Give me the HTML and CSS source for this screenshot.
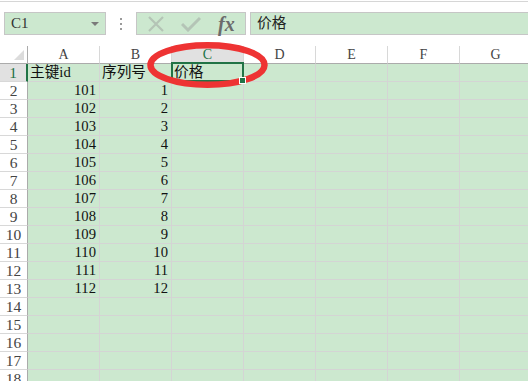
FILE: index.html
```html
<!DOCTYPE html>
<html lang="zh-CN">
<head>
    <meta charset="UTF-8">
    <title>Sheet1</title>
    <link rel="stylesheet" href="styles.css">
</head>
<body>
    <div class="toolbar">
        <div class="namebox">
            <span class="ref">C1</span>
            <span class="caret"></span>
        </div>
        <div class="grip"><i></i><i></i><i></i></div>
        <div class="fxbox">
            <svg class="btn" width="18" height="16" viewBox="0 0 18 16">
                <path d="M2 1 L16 15 M16 1 L2 15" stroke="#b4c4b6" stroke-width="2.2" fill="none"/>
            </svg>
            <svg class="btn" width="20" height="16" viewBox="0 0 20 16">
                <path d="M1 8 L7 14 L19 2" stroke="#b4c4b6" stroke-width="3" fill="none"/>
            </svg>
            <span class="fx">fx</span>
        </div>
        <div class="formula">价格</div>
    </div>

    <div class="sheet">
        <div class="corner"></div>
        <div class="colhead">A</div>
        <div class="colhead">B</div>
        <div class="colhead active">C</div>
        <div class="colhead">D</div>
        <div class="colhead">E</div>
        <div class="colhead">F</div>
        <div class="colhead">G</div>

        <div class="rowhead active">1</div>
        <div class="cell">主键id</div>
        <div class="cell">序列号</div>
        <div class="cell sel">价格</div>
        <div class="cell"></div><div class="cell"></div><div class="cell"></div><div class="cell"></div>

        <div class="rowhead">2</div><div class="cell num">101</div><div class="cell num">1</div>
        <div class="cell"></div><div class="cell"></div><div class="cell"></div><div class="cell"></div><div class="cell"></div>
        <div class="rowhead">3</div><div class="cell num">102</div><div class="cell num">2</div>
        <div class="cell"></div><div class="cell"></div><div class="cell"></div><div class="cell"></div><div class="cell"></div>
        <div class="rowhead">4</div><div class="cell num">103</div><div class="cell num">3</div>
        <div class="cell"></div><div class="cell"></div><div class="cell"></div><div class="cell"></div><div class="cell"></div>
        <div class="rowhead">5</div><div class="cell num">104</div><div class="cell num">4</div>
        <div class="cell"></div><div class="cell"></div><div class="cell"></div><div class="cell"></div><div class="cell"></div>
        <div class="rowhead">6</div><div class="cell num">105</div><div class="cell num">5</div>
        <div class="cell"></div><div class="cell"></div><div class="cell"></div><div class="cell"></div><div class="cell"></div>
        <div class="rowhead">7</div><div class="cell num">106</div><div class="cell num">6</div>
        <div class="cell"></div><div class="cell"></div><div class="cell"></div><div class="cell"></div><div class="cell"></div>
        <div class="rowhead">8</div><div class="cell num">107</div><div class="cell num">7</div>
        <div class="cell"></div><div class="cell"></div><div class="cell"></div><div class="cell"></div><div class="cell"></div>
        <div class="rowhead">9</div><div class="cell num">108</div><div class="cell num">8</div>
        <div class="cell"></div><div class="cell"></div><div class="cell"></div><div class="cell"></div><div class="cell"></div>
        <div class="rowhead">10</div><div class="cell num">109</div><div class="cell num">9</div>
        <div class="cell"></div><div class="cell"></div><div class="cell"></div><div class="cell"></div><div class="cell"></div>
        <div class="rowhead">11</div><div class="cell num">110</div><div class="cell num">10</div>
        <div class="cell"></div><div class="cell"></div><div class="cell"></div><div class="cell"></div><div class="cell"></div>
        <div class="rowhead">12</div><div class="cell num">111</div><div class="cell num">11</div>
        <div class="cell"></div><div class="cell"></div><div class="cell"></div><div class="cell"></div><div class="cell"></div>
        <div class="rowhead">13</div><div class="cell num">112</div><div class="cell num">12</div>
        <div class="cell"></div><div class="cell"></div><div class="cell"></div><div class="cell"></div><div class="cell"></div>
        <div class="rowhead">14</div>
        <div class="cell"></div><div class="cell"></div><div class="cell"></div><div class="cell"></div><div class="cell"></div><div class="cell"></div><div class="cell"></div>
        <div class="rowhead">15</div>
        <div class="cell"></div><div class="cell"></div><div class="cell"></div><div class="cell"></div><div class="cell"></div><div class="cell"></div><div class="cell"></div>
        <div class="rowhead">16</div>
        <div class="cell"></div><div class="cell"></div><div class="cell"></div><div class="cell"></div><div class="cell"></div><div class="cell"></div><div class="cell"></div>
        <div class="rowhead">17</div>
        <div class="cell"></div><div class="cell"></div><div class="cell"></div><div class="cell"></div><div class="cell"></div><div class="cell"></div><div class="cell"></div>
        <div class="rowhead">18</div>
        <div class="cell"></div><div class="cell"></div><div class="cell"></div><div class="cell"></div><div class="cell"></div><div class="cell"></div><div class="cell"></div>
    </div>

    <!-- hand-drawn red circle round the C1 cell -->
    <svg class="mark" width="528" height="381" viewBox="0 0 528 381">
        <ellipse cx="207.5" cy="65" rx="57" ry="19.8" fill="none" stroke="#ee3333" stroke-width="6.5"/>
    </svg>
</body>
</html>
```

FILE: styles.css
```css
body {
    margin: 0;
    background-color: white;
    font-family: "Liberation Serif", "Noto Sans CJK SC", serif;
    font-size: 14.67px;
    color: #111;
    overflow: hidden;
    height: 381px;
}
.toolbar {
    margin-top: 1px;
    border-top: 1px solid #d6d6d6;
    height: 34px;
    padding-top: 10px;
    display: flex;
    align-items: flex-start;
}
.namebox {
    margin-left: 4px;
    width: 102px;
    height: 23px;
    box-sizing: border-box;
    border: 1px solid #c6c6c6;
    background-color: #cce8cf;
    display: flex;
    align-items: center;
    justify-content: space-between;
    padding: 0 6px 0 6px;
}
.ref {
    color: #333;
    font-size: 15px;
}
.caret {
    width: 0;
    height: 0;
    border-left: 4px solid transparent;
    border-right: 4px solid transparent;
    border-top: 4px solid #7a7a7a;
}
.grip {
    width: 30px;
    height: 23px;
    display: flex;
    flex-direction: column;
    align-items: center;
    justify-content: center;
    gap: 3px;
}
.grip i {
    width: 2px;
    height: 2px;
    background-color: #9a9a9a;
}
.fxbox {
    width: 110px;
    height: 23px;
    box-sizing: border-box;
    border: 1px solid #c6c6c6;
    background-color: #cce8cf;
    display: flex;
    align-items: center;
    padding-left: 10px;
}
.fxbox .btn {
    display: block;
    margin-right: 16px;
}
.fx {
    font-family: "Liberation Serif", serif;
    font-style: italic;
    font-weight: bold;
    font-size: 20px;
    color: #6b6b6b;
    margin-left: 1px;
    line-height: 20px;
}
.formula {
    flex: 1;
    margin-left: 4px;
    margin-right: -2px;
    height: 23px;
    box-sizing: border-box;
    border: 1px solid #c6c6c6;
    background-color: #cce8cf;
    padding-left: 6px;
    line-height: 21px;
    color: #222;
}
.sheet {
    display: grid;
    grid-template-columns: 28px repeat(7, 72px);
    grid-auto-rows: 18px;
    line-height: 17px;
}
.corner, .colhead, .rowhead, .cell {
    box-sizing: border-box;
}
.corner {
    background-color: white;
    border-right: 1px solid #ababab;
    border-bottom: 1px solid #ababab;
    position: relative;
}
.corner::after {
    content: "";
    position: absolute;
    right: 3px;
    bottom: 3px;
    width: 0;
    height: 0;
    border-left: 10px solid transparent;
    border-bottom: 10px solid #dcdcdc;
}
.colhead {
    background-color: white;
    border-right: 1px solid #d8d8d8;
    border-bottom: 1px solid #ababab;
    text-align: center;
    color: #444;
    font-size: 14px;
}
.colhead.active {
    background-color: #e1e1e1;
    color: #217346;
    border-bottom: 2px solid #217346;
}
.rowhead {
    background-color: white;
    border-right: 1px solid #ababab;
    border-bottom: 1px solid #d8d8d8;
    text-align: center;
    color: #444;
    font-size: 15.5px;
}
.rowhead.active {
    background-color: #e1e1e1;
    color: #217346;
    border-right: 2px solid #217346;
}
.cell {
    background-color: #cce8cf;
    border-right: 1px solid #d4d4d4;
    border-bottom: 1px solid #d4d4d4;
    padding: 0 2px;
    white-space: nowrap;
    overflow: visible;
}
.cell.num {
    text-align: right;
    padding-right: 3px;
}
.cell.sel {
    position: relative;
}
.cell.sel::after {
    content: "";
    position: absolute;
    top: -2px;
    left: -1px;
    right: -1px;
    bottom: -1px;
    border: 2px solid #217346;
}
.cell.sel::before {
    content: "";
    position: absolute;
    right: -3px;
    bottom: -3px;
    width: 5px;
    height: 5px;
    background-color: #217346;
    border: 1px solid white;
    z-index: 1;
}
.mark {
    position: absolute;
    left: 0;
    top: 0;
    pointer-events: none;
}
```
